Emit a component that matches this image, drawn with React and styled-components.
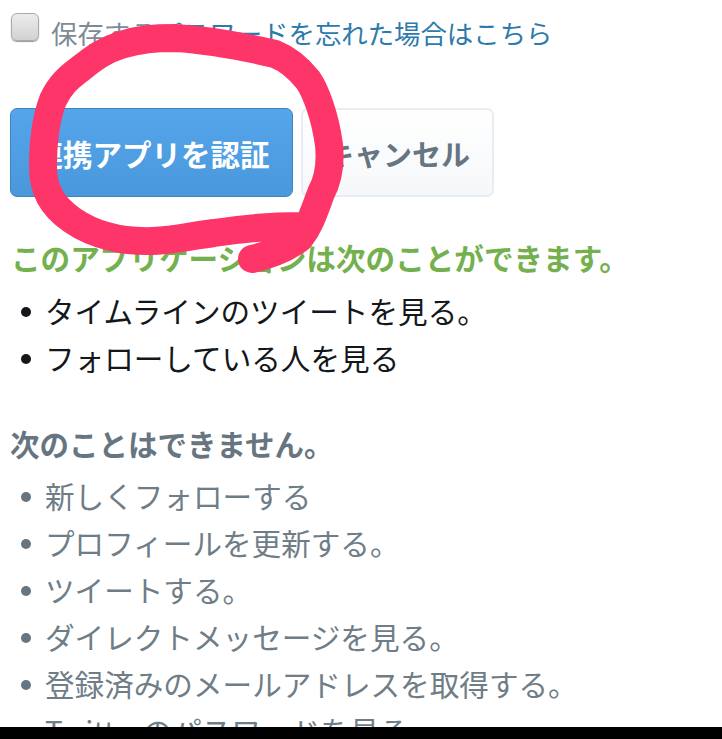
import styled, { createGlobalStyle } from "styled-components";

const allowed = ["タイムラインのツイートを見る。", "フォローしている人を見る"];
const denied = [
  "新しくフォローする",
  "プロフィールを更新する。",
  "ツイートする。",
  "ダイレクトメッセージを見る。",
  "登録済みのメールアドレスを取得する。",
  "Twitterのパスワードを見る。",
];

const App = () => {
  return (
    <Page>
      <GlobalStyle />
      <Content>
        <RememberRow>
          <Checkbox />
          <RememberLabel>保存する</RememberLabel>
          <ForgotLink href="#">パスワードを忘れた場合はこちら</ForgotLink>
        </RememberRow>
        <Buttons>
          <PrimaryButton>連携アプリを認証</PrimaryButton>
          <CancelButton>キャンセル</CancelButton>
        </Buttons>
        <AllowedTitle>このアプリケーションは次のことができます。</AllowedTitle>
        <List>
          {allowed.map((el) => (
            <Item key={el}>{el}</Item>
          ))}
        </List>
        <DeniedTitle>次のことはできません。</DeniedTitle>
        <List $muted>
          {denied.map((el) => (
            <Item key={el} $muted>
              {el}
            </Item>
          ))}
        </List>
        <Scribble viewBox="0 0 722 739">
          <path
            d="M300 226 C270 226 240 229 214 233 C190 236 175 240 153 241 C125 242 95 236 72 220 C52 206 43 190 43 167 C43 140 46 118 53 100 C60 85 68 78 80 69 C95 57 105 50 121 45 C140 39 155 38 175 38 C210 40 245 47 275 54 C290 60 300 70 308 80 C315 90 325 115 329 145 C331 165 328 180 321 193 C314 212 310 225 300 238 C285 250 265 256 252 259"
            fill="none"
            stroke="#fe3568"
            strokeWidth="28"
            strokeLinecap="round"
            strokeLinejoin="round"
          />
        </Scribble>
      </Content>
      <BottomBar />
    </Page>
  );
};
export default App;

const GlobalStyle = createGlobalStyle`
  html, body {
    margin: 0;
    padding: 0;
    background: #fff;
  }
`;

const Page = styled.div`
  width: 722px;
  height: 739px;
  display: flex;
  flex-direction: column;
  overflow: hidden;
  font-family: "Noto Sans CJK JP", "Noto Sans", sans-serif;
`;

const Content = styled.div`
  position: relative;
  flex: 1;
  min-height: 0;
  overflow: hidden;
  padding: 13px 0 0 10px;
`;

const BottomBar = styled.div`
  height: 12px;
  flex: none;
  background: #000;
`;

const RememberRow = styled.div`
  display: flex;
  align-items: flex-start;
  height: 40px;
  font-size: 26.4px;
  line-height: 40px;
`;

const Checkbox = styled.span`
  width: 28px;
  height: 28px;
  margin: 0 12px 0 1px;
  flex: none;
  box-sizing: border-box;
  border: 1px solid #a9a9a9;
  border-radius: 6px;
  background: linear-gradient(#ececec, #d2d2d2);
  box-shadow: 0 1px 1px #999;
`;

const RememberLabel = styled.span`
  color: #7d8b96;
`;

const ForgotLink = styled.a`
  color: #2d7bab;
  text-decoration: none;
`;

const Buttons = styled.div`
  display: flex;
  gap: 8px;
  margin-top: 55px;
`;

const PrimaryButton = styled.button`
  width: 283px;
  height: 89px;
  padding: 0;
  border: 1px solid #3f85bd;
  border-radius: 7px;
  background: linear-gradient(#55a5ea, #4a98dc);
  color: #fff;
  font: 700 29.5px "Noto Sans CJK JP", sans-serif;
`;

const CancelButton = styled.button`
  width: 193px;
  height: 89px;
  padding: 0;
  border: 2px solid #e8edf2;
  border-radius: 7px;
  background: linear-gradient(#fff, #f5f8fa);
  color: #66757f;
  font: 700 29px "Noto Sans CJK JP", sans-serif;
`;

const AllowedTitle = styled.h2`
  margin: 41px 0 0 1px;
  color: #74b04e;
  font-size: 29.6px;
  line-height: 40px;
  font-weight: 700;
  white-space: nowrap;
`;

const DeniedTitle = styled.h2`
  margin: 45px 0 0;
  color: #66757f;
  font-size: 29.5px;
  line-height: 40px;
  font-weight: 700;
`;

const List = styled.ul`
  display: flex;
  flex-direction: column;
  gap: 7px;
  margin: 13px 0 0;
  padding: 0;
  list-style: none;
  color: ${(p) => (p.$muted ? "#6f7d87" : "#14171a")};
`;

const Item = styled.li`
  display: flex;
  align-items: center;
  height: 40px;
  font-size: 29.6px;
  line-height: 40px;
  white-space: nowrap;

  &::before {
    content: "";
    width: 10px;
    height: 10px;
    margin: 2px 14px 0 11px;
    flex: none;
    border-radius: 50%;
    background: ${(p) => (p.$muted ? "#66757f" : "#14171a")};
  }
`;

const Scribble = styled.svg`
  position: absolute;
  top: 0;
  left: 0;
  width: 722px;
  height: 739px;
  pointer-events: none;
`;
